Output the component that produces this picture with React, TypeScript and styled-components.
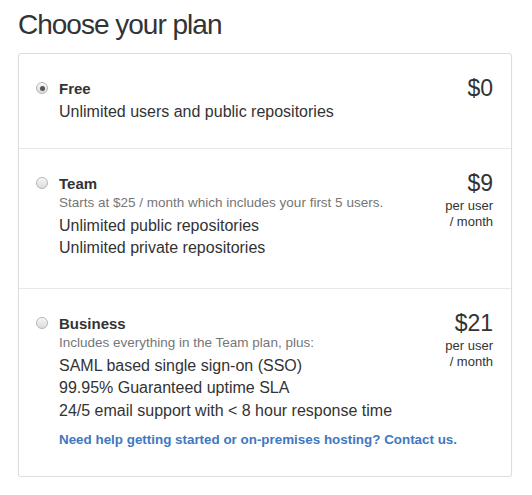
import React from "react";
import styled, { createGlobalStyle } from "styled-components";

const GlobalStyle = createGlobalStyle`
  html, body { margin: 0; padding: 0; background: #fff; }
  body {
    font-family: "Liberation Sans", Arial, Helvetica, sans-serif;
    color: #333;
    -webkit-font-smoothing: antialiased;
  }
  * { box-sizing: border-box; }
`;

const Page = styled.div`
  width: 532px;
  padding: 7px 20px 0 18px;
`;

const Title = styled.h2`
  margin: 0 0 10px;
  font-size: 28px;
  line-height: 36px;
  font-weight: 300;
  color: #333;
  letter-spacing: -1px;
`;

const Card = styled.div`
  border: 1px solid #ddd;
  border-radius: 3px;
  box-shadow: 0 1px 2px rgba(0, 0, 0, 0.06);
  background: #fff;
`;

const Row = styled.label`
  display: grid;
  grid-template-columns: 12px 1fr auto;
  column-gap: 11px;
  align-items: start;
  padding: 25px 18px 24px 17px;
  border-top: 1px solid #e8e8e8;
  &:first-child { border-top: 0; }
`;

const Radio = styled.span<{ $checked?: boolean }>`
  position: relative;
  width: 12px;
  height: 12px;
  margin-top: 3px;
  border-radius: 50%;
  border: 1px solid #b4b4b4;
  background: linear-gradient(#f4f4f4, #dcdcdc);
  box-shadow: inset 0 1px 1px rgba(255, 255, 255, 0.8);
  &::after {
    content: "";
    display: ${(p) => (p.$checked ? "block" : "none")};
    position: absolute;
    left: 2.5px;
    top: 2.5px;
    width: 5px;
    height: 5px;
    border-radius: 50%;
    background: #555;
  }
`;

const Content = styled.div`
  min-width: 0;
`;

const Name = styled.div`
  font-size: 15px;
  line-height: 20px;
  font-weight: 700;
  color: #333;
`;

const Note = styled.div`
  font-size: 13.5px;
  line-height: 18px;
  color: #767676;
`;

const Description = styled.p`
  margin: 2px 0 0;
  font-size: 16px;
  line-height: 22.5px;
  color: #333;
`;

const Features = styled.ul`
  list-style: none;
  margin: 3px 0 4px;
  padding: 0;
`;

const Feature = styled.li`
  font-size: 16px;
  line-height: 22.5px;
  color: #333;
`;

const HelpLink = styled.a`
  grid-column: 2 / 4;
  display: block;
  margin: 5px 0 3px;
  font-size: 13.4px;
  line-height: 18px;
  font-weight: 700;
  color: #4078c0;
  text-decoration: none;
  white-space: nowrap;
`;

const PriceBox = styled.div`
  text-align: right;
  margin-left: 5px;
`;

const Amount = styled.div`
  font-size: 23px;
  line-height: 30px;
  margin-top: -6px;
  font-weight: 300;
  color: #333;
`;

const Unit = styled.div`
  font-size: 13px;
  line-height: 16px;
  color: #333;
`;

type Plan = {
  name: string;
  price: string;
  perUser?: boolean;
  note?: string;
  description?: string;
  features?: string[];
  checked?: boolean;
  help?: boolean;
};

const plans: Plan[] = [
  {
    name: "Free",
    price: "$0",
    description: "Unlimited users and public repositories",
    checked: true,
  },
  {
    name: "Team",
    price: "$9",
    perUser: true,
    note: "Starts at $25 / month which includes your first 5 users.",
    features: ["Unlimited public repositories", "Unlimited private repositories"],
  },
  {
    name: "Business",
    price: "$21",
    perUser: true,
    note: "Includes everything in the Team plan, plus:",
    features: [
      "SAML based single sign-on (SSO)",
      "99.95% Guaranteed uptime SLA",
      "24/5 email support with < 8 hour response time",
    ],
    help: true,
  },
];

export default function App() {
  return (
    <>
      <GlobalStyle />
      <Page>
        <Title>Choose your plan</Title>
        <Card>
          {plans.map((p) => (
            <Row key={p.name}>
              <Radio $checked={p.checked} />
              <Content>
                <Name>{p.name}</Name>
                {p.note && <Note>{p.note}</Note>}
                {p.description && <Description>{p.description}</Description>}
                {p.features && (
                  <Features>
                    {p.features.map((f) => (
                      <Feature key={f}>{f}</Feature>
                    ))}
                  </Features>
                )}
              </Content>
              <PriceBox>
                <Amount>{p.price}</Amount>
                {p.perUser && (
                  <>
                    <Unit>per user</Unit>
                    <Unit>/ month</Unit>
                  </>
                )}
              </PriceBox>
              {p.help && (
                <HelpLink href="#">
                  Need help getting started or on-premises hosting? Contact us.
                </HelpLink>
              )}
            </Row>
          ))}
        </Card>
      </Page>
    </>
  );
}
